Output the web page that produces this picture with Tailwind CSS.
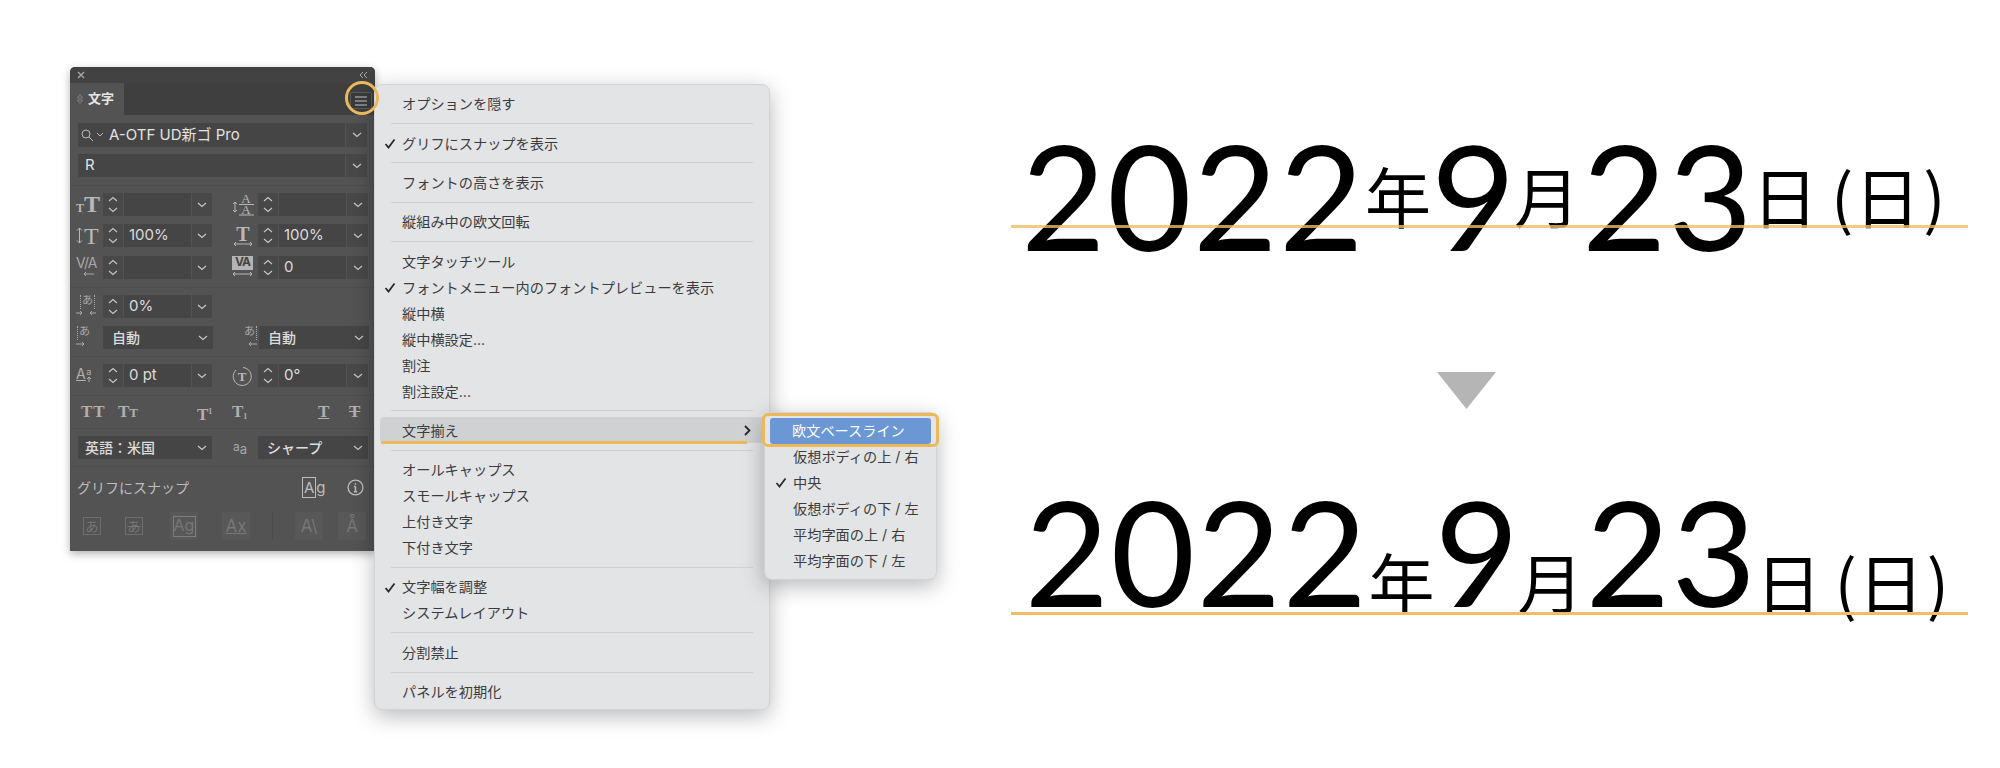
<!DOCTYPE html>
<html lang="ja">
<head>
<meta charset="UTF-8">
<title>文字揃え</title>
<script src="https://cdn.jsdelivr.net/npm/@tailwindcss/browser@4"></script>
</head>
<body class="bg-white">
<div class="relative flex w-[2000px] h-[768px] overflow-hidden bg-white font-['Inter','Noto_Sans_CJK_JP',sans-serif]">

  <!-- Character panel -->
  <div class="absolute left-[70px] top-[67px] w-[305px] h-[484px] bg-[#535353] rounded-t-[5px] shadow-[0_3px_8px_rgba(0,0,0,0.3)] text-[#dcdcdc] text-[15px] flex flex-col">
    <div class="h-[16px] bg-[#424242] rounded-t-[5px] flex items-center justify-between px-[7px] text-[#a8a8a8]">
      <svg class="w-[8px] h-[8px]" viewBox="0 0 8 8"><path d="M1 1l6 6M7 1l-6 6" stroke="currentColor" stroke-width="1.4"/></svg>
      <svg class="w-[9px] h-[8px]" viewBox="0 0 9 8"><path d="M4 1L1 4l3 3M8 1L5 4l3 3" fill="none" stroke="currentColor" stroke-width="1"/></svg>
    </div>
    <div class="h-[32px] bg-[#3f3f3f] flex items-stretch justify-between">
      <div class="w-[54px] bg-[#535353] flex items-center pl-[7px] gap-[5px] text-[13px] font-bold text-[#e6e6e6]">
        <svg class="w-[6px] h-[10px] text-[#8c8c8c]" viewBox="0 0 6 10"><path d="M3 .5L5.5 4h-5zM3 9.500L.5 6h5z" fill="none" stroke="currentColor" stroke-width=".8"/></svg>
        <span>文字</span>
      </div>
      <div class="w-[22px] h-[17px] mt-[9px] mr-[3px] bg-[#3a3a3a] border border-[#5c5c5c] rounded-[2px] flex items-center justify-center">
        <svg class="w-[12px] h-[10px]" viewBox="0 0 12 10"><path d="M0 1h12M0 5h12M0 9h12" stroke="#c6c6c6" stroke-width="1"/></svg>
      </div>
    </div>

    <!-- font family / style -->
    <div class="mx-[8px] mt-[8px] h-[24px] flex gap-[1px]">
      <div class="flex-1 bg-[#454545] flex items-center pl-[2px] text-[#e2e2e2]">
        <svg class="w-[24px] h-[14px] text-[#b9b9b9] mr-[5px]" viewBox="0 0 24 14"><circle cx="6" cy="6" r="4" fill="none" stroke="currentColor" stroke-width="1"/><path d="M9 9l4 4M17 5l3 3 3-3" fill="none" stroke="currentColor" stroke-width="1"/></svg>
        <span>A-OTF UD新ゴ Pro</span>
      </div>
      <div class="w-[21px] bg-[#484848] flex items-center justify-center"><svg class="w-[10px] h-[6px]" viewBox="0 0 10 6"><path d="M1 1l4 3.500L9 1" fill="none" stroke="#c8c8c8" stroke-width="1.200"/></svg></div>
    </div>
    <div class="mx-[8px] mt-[7px] h-[23px] flex gap-[1px]">
      <div class="flex-1 bg-[#454545] flex items-center pl-[7px] text-[#e2e2e2]"><span>R</span></div>
      <div class="w-[21px] bg-[#484848] flex items-center justify-center"><svg class="w-[10px] h-[6px]" viewBox="0 0 10 6"><path d="M1 1l4 3.500L9 1" fill="none" stroke="#c8c8c8" stroke-width="1.200"/></svg></div>
    </div>
    <div class="mt-[8px] h-px bg-[#4d4d4d]"></div>

    <!-- size / leading -->
    <div class="mt-[7px] h-[23px] flex pl-[6px]">
      <div class="w-[27px] flex items-end text-[#b8b8b8] font-['Liberation_Serif',serif] font-bold leading-none"><span class="text-[12px] mb-[2px]">T</span><span class="text-[24px]">T</span></div>
      <div class="w-[20px] bg-[#484848] flex items-center justify-center"><svg class="w-[10px] h-[17px]" viewBox="0 0 10 17"><path d="M1 5l4-3.500L9 5M1 12l4 3.500L9 12" fill="none" stroke="#c8c8c8" stroke-width="1.100"/></svg></div>
      <div class="ml-[1px] w-[67px] bg-[#454545]"></div>
      <div class="ml-[1px] w-[20px] bg-[#484848] flex items-center justify-center"><svg class="w-[10px] h-[6px]" viewBox="0 0 10 6"><path d="M1 1l4 3.500L9 1" fill="none" stroke="#c8c8c8" stroke-width="1.200"/></svg></div>
      <div class="ml-[20px] w-[26px]">
        <svg class="w-[22px] h-[23px] text-[#b8b8b8]" viewBox="0 0 22 23"><text x="14" y="10" text-anchor="middle" font-size="13" font-family="Liberation Serif" fill="currentColor">A</text><text x="14" y="21" text-anchor="middle" font-size="13" font-family="Liberation Serif" fill="currentColor">A</text><path d="M7 11.500h15M7 22h15M3 9v10M1 11l2-2 2 2M1 17l2 2 2-2" fill="none" stroke="currentColor" stroke-width="1"/></svg>
      </div>
      <div class="w-[20px] bg-[#484848] flex items-center justify-center"><svg class="w-[10px] h-[17px]" viewBox="0 0 10 17"><path d="M1 5l4-3.500L9 5M1 12l4 3.500L9 12" fill="none" stroke="#c8c8c8" stroke-width="1.100"/></svg></div>
      <div class="ml-[1px] w-[67px] bg-[#454545]"></div>
      <div class="ml-[1px] w-[21px] bg-[#484848] flex items-center justify-center"><svg class="w-[10px] h-[6px]" viewBox="0 0 10 6"><path d="M1 1l4 3.500L9 1" fill="none" stroke="#c8c8c8" stroke-width="1.200"/></svg></div>
    </div>
    <div class="mt-[8px] h-[23px] flex pl-[6px]">
      <div class="w-[27px] flex items-center text-[#b8b8b8] font-['Liberation_Serif',serif] leading-none"><svg class="w-[7px] h-[17px]" viewBox="0 0 7 17"><path d="M3.500 1v15M1 3.500L3.500 1 6 3.500M1 13.500L3.500 16 6 13.500" fill="none" stroke="currentColor" stroke-width="1"/></svg><span class="text-[24px] ml-px">T</span></div>
      <div class="w-[20px] bg-[#484848] flex items-center justify-center"><svg class="w-[10px] h-[17px]" viewBox="0 0 10 17"><path d="M1 5l4-3.500L9 5M1 12l4 3.500L9 12" fill="none" stroke="#c8c8c8" stroke-width="1.100"/></svg></div>
      <div class="ml-[1px] w-[67px] bg-[#454545] flex items-center pl-[5px]">100%</div>
      <div class="ml-[1px] w-[20px] bg-[#484848] flex items-center justify-center"><svg class="w-[10px] h-[6px]" viewBox="0 0 10 6"><path d="M1 1l4 3.500L9 1" fill="none" stroke="#c8c8c8" stroke-width="1.200"/></svg></div>
      <div class="ml-[20px] w-[26px] flex flex-col items-center text-[#b8b8b8] font-['Liberation_Serif',serif] font-bold leading-none pr-[4px]"><span class="text-[20px] h-[17px]">T</span><svg class="w-[20px] h-[6px]" viewBox="0 0 20 6"><path d="M1 3h18M3 1L1 3l2 2M17 1l2 2-2 2" fill="none" stroke="currentColor" stroke-width="1"/></svg></div>
      <div class="w-[20px] bg-[#484848] flex items-center justify-center"><svg class="w-[10px] h-[17px]" viewBox="0 0 10 17"><path d="M1 5l4-3.500L9 5M1 12l4 3.500L9 12" fill="none" stroke="#c8c8c8" stroke-width="1.100"/></svg></div>
      <div class="ml-[1px] w-[67px] bg-[#454545] flex items-center pl-[5px]">100%</div>
      <div class="ml-[1px] w-[21px] bg-[#484848] flex items-center justify-center"><svg class="w-[10px] h-[6px]" viewBox="0 0 10 6"><path d="M1 1l4 3.500L9 1" fill="none" stroke="#c8c8c8" stroke-width="1.200"/></svg></div>
    </div>
    <div class="mt-[9px] h-[23px] flex pl-[6px]">
      <div class="w-[27px] flex flex-col text-[#a8a8a8] leading-none"><span class="text-[14px] h-[15px] tracking-[-1px]">V/A</span><svg class="w-[20px] h-[6px]" viewBox="0 0 20 6"><path d="M8 3h10M10 1L8 3l2 2" fill="none" stroke="currentColor" stroke-width="1"/></svg></div>
      <div class="w-[20px] bg-[#484848] flex items-center justify-center"><svg class="w-[10px] h-[17px]" viewBox="0 0 10 17"><path d="M1 5l4-3.500L9 5M1 12l4 3.500L9 12" fill="none" stroke="#c8c8c8" stroke-width="1.100"/></svg></div>
      <div class="ml-[1px] w-[67px] bg-[#454545]"></div>
      <div class="ml-[1px] w-[20px] bg-[#484848] flex items-center justify-center"><svg class="w-[10px] h-[6px]" viewBox="0 0 10 6"><path d="M1 1l4 3.500L9 1" fill="none" stroke="#c8c8c8" stroke-width="1.200"/></svg></div>
      <div class="ml-[20px] w-[26px] flex flex-col items-start leading-none"><span class="w-[21px] h-[14px] bg-[#b4b4b4] text-[#444444] text-[12px] font-bold text-center tracking-[-1px]">VA</span><svg class="w-[21px] h-[7px] text-[#b8b8b8]" viewBox="0 0 21 7"><path d="M1 4h19M3 2L1 4l2 2M18 2l2 2-2 2" fill="none" stroke="currentColor" stroke-width="1"/></svg></div>
      <div class="w-[20px] bg-[#484848] flex items-center justify-center"><svg class="w-[10px] h-[17px]" viewBox="0 0 10 17"><path d="M1 5l4-3.500L9 5M1 12l4 3.500L9 12" fill="none" stroke="#c8c8c8" stroke-width="1.100"/></svg></div>
      <div class="ml-[1px] w-[67px] bg-[#454545] flex items-center pl-[5px]">0</div>
      <div class="ml-[1px] w-[21px] bg-[#484848] flex items-center justify-center"><svg class="w-[10px] h-[6px]" viewBox="0 0 10 6"><path d="M1 1l4 3.500L9 1" fill="none" stroke="#c8c8c8" stroke-width="1.200"/></svg></div>
    </div>
    <div class="mt-[8px] h-px bg-[#4d4d4d]"></div>

    <!-- tsume -->
    <div class="mt-[7px] h-[23px] flex pl-[6px]">
      <div class="w-[27px] flex flex-col items-start text-[#a8a8a8] leading-none"><span class="ml-[4px] px-px text-[11px] h-[14px] border-x border-dotted border-[#a8a8a8]">あ</span><svg class="w-[20px] h-[7px]" viewBox="0 0 20 7"><path d="M0 4h6M4 2l2 2-2 2M20 4h-6M16 2l-2 2 2 2" fill="none" stroke="currentColor" stroke-width="1"/></svg></div>
      <div class="w-[20px] bg-[#484848] flex items-center justify-center"><svg class="w-[10px] h-[17px]" viewBox="0 0 10 17"><path d="M1 5l4-3.500L9 5M1 12l4 3.500L9 12" fill="none" stroke="#c8c8c8" stroke-width="1.100"/></svg></div>
      <div class="ml-[1px] w-[67px] bg-[#454545] flex items-center pl-[5px]">0%</div>
      <div class="ml-[1px] w-[20px] bg-[#484848] flex items-center justify-center"><svg class="w-[10px] h-[6px]" viewBox="0 0 10 6"><path d="M1 1l4 3.500L9 1" fill="none" stroke="#c8c8c8" stroke-width="1.200"/></svg></div>
    </div>
    <div class="mt-[8px] h-[23px] flex pl-[6px]">
      <div class="w-[27px] flex flex-col items-start text-[#a8a8a8] leading-none"><span class="ml-[1px] px-px text-[11px] h-[14px] border-l border-dotted border-[#a8a8a8]">あ</span><svg class="w-[20px] h-[7px]" viewBox="0 0 20 7"><path d="M0 4h8M6 2l2 2-2 2" fill="none" stroke="currentColor" stroke-width="1"/></svg></div>
      <div class="w-[110px] bg-[#454545] flex items-center justify-between pl-[9px] pr-[5px] text-[14px] font-medium"><span>自動</span><svg class="w-[10px] h-[6px]" viewBox="0 0 10 6"><path d="M1 1l4 3.500L9 1" fill="none" stroke="#c8c8c8" stroke-width="1.200"/></svg></div>
      <div class="ml-[19px] w-[27px] flex flex-col items-end pr-[2px] text-[#a8a8a8] leading-none"><span class="px-px text-[11px] h-[14px] border-r border-dotted border-[#a8a8a8]">あ</span><svg class="w-[10px] h-[7px]" viewBox="0 0 10 7"><path d="M10 4H2M4 2L2 4l2 2" fill="none" stroke="currentColor" stroke-width="1"/></svg></div>
      <div class="w-[110px] bg-[#454545] flex items-center justify-between pl-[9px] pr-[5px] text-[14px] font-medium"><span>自動</span><svg class="w-[10px] h-[6px]" viewBox="0 0 10 6"><path d="M1 1l4 3.500L9 1" fill="none" stroke="#c8c8c8" stroke-width="1.200"/></svg></div>
    </div>
    <div class="mt-[7px] h-px bg-[#4d4d4d]"></div>

    <!-- baseline shift / rotation -->
    <div class="mt-[7px] h-[23px] flex pl-[6px]">
      <div class="w-[27px] flex items-start text-[#b0b0b0] leading-none"><span class="text-[14px] underline mt-[3px]">A</span><span class="text-[9px] mt-[3px] flex flex-col items-center">a<svg class="w-[6px] h-[6px]" viewBox="0 0 6 6"><path d="M3 6V1M1 3l2-2 2 2" fill="none" stroke="currentColor" stroke-width="1"/></svg></span></div>
      <div class="w-[20px] bg-[#484848] flex items-center justify-center"><svg class="w-[10px] h-[17px]" viewBox="0 0 10 17"><path d="M1 5l4-3.500L9 5M1 12l4 3.500L9 12" fill="none" stroke="#c8c8c8" stroke-width="1.100"/></svg></div>
      <div class="ml-[1px] w-[67px] bg-[#454545] flex items-center pl-[5px]">0 pt</div>
      <div class="ml-[1px] w-[20px] bg-[#484848] flex items-center justify-center"><svg class="w-[10px] h-[6px]" viewBox="0 0 10 6"><path d="M1 1l4 3.500L9 1" fill="none" stroke="#c8c8c8" stroke-width="1.200"/></svg></div>
      <div class="ml-[20px] w-[26px] flex items-center">
        <svg class="w-[20px] h-[20px] text-[#b8b8b8]" viewBox="0 0 20 20"><path d="M4 4a9 9 0 1 0 7-2.500" fill="none" stroke="currentColor" stroke-width="1"/><text x="10" y="15" text-anchor="middle" font-size="13" font-family="Liberation Serif" font-weight="bold" fill="currentColor">T</text></svg>
      </div>
      <div class="w-[20px] bg-[#484848] flex items-center justify-center"><svg class="w-[10px] h-[17px]" viewBox="0 0 10 17"><path d="M1 5l4-3.500L9 5M1 12l4 3.500L9 12" fill="none" stroke="#c8c8c8" stroke-width="1.100"/></svg></div>
      <div class="ml-[1px] w-[67px] bg-[#454545] flex items-center pl-[5px]">0°</div>
      <div class="ml-[1px] w-[21px] bg-[#484848] flex items-center justify-center"><svg class="w-[10px] h-[6px]" viewBox="0 0 10 6"><path d="M1 1l4 3.500L9 1" fill="none" stroke="#c8c8c8" stroke-width="1.200"/></svg></div>
    </div>
    <div class="mt-[8px] h-px bg-[#4d4d4d]"></div>

    <!-- TT row -->
    <div class="mt-[7px] h-[18px] relative text-[#b0b0b0] font-['Liberation_Serif',serif] font-bold text-[17px] leading-[18px]">
      <span class="absolute left-[11px] tracking-[1px]">TT</span>
      <span class="absolute left-[48px]">T<span class="text-[13px]">T</span></span>
      <span class="absolute left-[127px]">T<span class="text-[8px] align-[6px]">1</span></span>
      <span class="absolute left-[162px]">T<span class="text-[8px] align-[-2px]">1</span></span>
      <span class="absolute left-[248px] underline">T</span>
      <span class="absolute left-[279px] line-through">T</span>
    </div>
    <div class="mt-[7px] h-px bg-[#4d4d4d]"></div>

    <!-- language / anti-alias -->
    <div class="mt-[7px] h-[23px] flex pl-[8px]">
      <div class="w-[134px] bg-[#454545] flex items-center justify-between pl-[7px] pr-[5px] text-[14px] font-medium"><span>英語：米国</span><svg class="w-[10px] h-[6px]" viewBox="0 0 10 6"><path d="M1 1l4 3.500L9 1" fill="none" stroke="#c8c8c8" stroke-width="1.200"/></svg></div>
      <div class="w-[46px] pl-[21px] text-[#a8a8a8] text-[12px] leading-[20px]">a<span class="text-[13px] relative top-[3px]">a</span></div>
      <div class="w-[110px] bg-[#454545] flex items-center justify-between pl-[9px] pr-[5px] text-[14px] font-medium"><span>シャープ</span><svg class="w-[10px] h-[6px]" viewBox="0 0 10 6"><path d="M1 1l4 3.500L9 1" fill="none" stroke="#c8c8c8" stroke-width="1.200"/></svg></div>
    </div>
    <div class="mt-[7px] h-px bg-[#4d4d4d]"></div>

    <!-- glyph snap -->
    <div class="mt-[10px] h-[20px] flex items-center pl-[7px] text-[#bdbdbd] text-[14px]">
      <span>グリフにスナップ</span>
      <span class="ml-[113px] text-[15px] leading-none"><span class="border border-[#bdbdbd] px-px">A</span>g</span>
      <svg class="ml-[21px] w-[17px] h-[17px]" viewBox="0 0 16 16"><circle cx="8" cy="8" r="7" fill="none" stroke="currentColor" stroke-width="1.200"/><path d="M8 7v5M6.500 7H8M6.500 12h3M8 4v1.500" fill="none" stroke="currentColor" stroke-width="1.400"/></svg>
    </div>

    <!-- disabled snap buttons -->
    <div class="mt-[15px] h-[28px] flex items-center pl-[13px] text-[#777777] text-[13px] leading-none">
      <span class="w-[18px] h-[18px] border border-[#6e6e6e] flex items-center justify-center">あ</span>
      <span class="ml-[24px] w-[18px] h-[18px] border border-[#6e6e6e] flex items-center justify-center line-through">あ</span>
      <span class="ml-[27px] w-[28px] h-[28px] bg-[#585858] flex items-center justify-center"><span class="w-[23px] h-[21px] border border-[#7c7c7c] text-[16px] text-center">Ag</span></span>
      <span class="ml-[24px] w-[28px] h-[28px] bg-[#585858] flex items-center justify-center text-[17px] underline">Ax</span>
      <span class="ml-[22px] w-px h-[28px] bg-[#4b4b4b]"></span>
      <span class="ml-[22px] w-[28px] h-[28px] bg-[#585858] flex items-center justify-center text-[17px]">A\</span>
      <span class="ml-[15px] w-[28px] h-[28px] bg-[#585858] flex items-center justify-center text-[17px]">Å</span>
    </div>
  </div>

  <!-- Highlight ring on the panel menu button -->
  <div class="absolute left-[345px] top-[81px] w-[34px] h-[34px] rounded-full border-[3px] border-[#ebb95c] z-20"></div>

  <!-- Panel menu -->
  <div class="absolute left-[374px] top-[84px] w-[396px] h-[626px] pt-[6px] bg-[#e3e4e6] rounded-[8px] border border-[#d2d3d5] shadow-[0_6px_22px_rgba(0,0,0,0.28)] text-[#3c3c3e] text-[14.200px] z-10">
    <div class="h-[26px] pl-[27px] flex items-center">オプションを隠す</div>
    <div class="h-[13.300px] flex items-center px-[16px]"><div class="w-full h-px bg-[#cfd0d2]"></div></div>
    <div class="relative h-[26px] pl-[27px] flex items-center"><svg class="absolute left-[9px] w-[12px] h-[11px]" viewBox="0 0 12 11"><path d="M1.500 6l3 3.500L10.500 1.500" fill="none" stroke="#2a2a2a" stroke-width="1.800"/></svg>グリフにスナップを表示</div>
    <div class="h-[13.300px] flex items-center px-[16px]"><div class="w-full h-px bg-[#cfd0d2]"></div></div>
    <div class="h-[26px] pl-[27px] flex items-center">フォントの高さを表示</div>
    <div class="h-[13.300px] flex items-center px-[16px]"><div class="w-full h-px bg-[#cfd0d2]"></div></div>
    <div class="h-[26px] pl-[27px] flex items-center">縦組み中の欧文回転</div>
    <div class="h-[13.300px] flex items-center px-[16px]"><div class="w-full h-px bg-[#cfd0d2]"></div></div>
    <div class="h-[26px] pl-[27px] flex items-center">文字タッチツール</div>
    <div class="relative h-[26px] pl-[27px] flex items-center"><svg class="absolute left-[9px] w-[12px] h-[11px]" viewBox="0 0 12 11"><path d="M1.500 6l3 3.500L10.500 1.500" fill="none" stroke="#2a2a2a" stroke-width="1.800"/></svg>フォントメニュー内のフォントプレビューを表示</div>
    <div class="h-[26px] pl-[27px] flex items-center">縦中横</div>
    <div class="h-[26px] pl-[27px] flex items-center">縦中横設定...</div>
    <div class="h-[26px] pl-[27px] flex items-center">割注</div>
    <div class="h-[26px] pl-[27px] flex items-center">割注設定...</div>
    <div class="h-[13.300px] flex items-center px-[16px]"><div class="w-full h-px bg-[#cfd0d2]"></div></div>
    <div class="relative mx-[5px] h-[26px] pl-[22px] pr-[13px] flex items-center justify-between bg-[#d0d1d3] rounded-[4px]">
      <span>文字揃え</span>
      <svg class="w-[7px] h-[11px]" viewBox="0 0 7 11"><path d="M1 1l4.500 4.500L1 10" fill="none" stroke="#2a2a2a" stroke-width="1.800"/></svg>
      <div class="absolute left-[1px] right-[17px] bottom-[-1px] h-[3px] bg-[#ebb95c]"></div>
    </div>
    <div class="h-[13.300px] flex items-center px-[16px]"><div class="w-full h-px bg-[#cfd0d2]"></div></div>
    <div class="h-[26px] pl-[27px] flex items-center">オールキャップス</div>
    <div class="h-[26px] pl-[27px] flex items-center">スモールキャップス</div>
    <div class="h-[26px] pl-[27px] flex items-center">上付き文字</div>
    <div class="h-[26px] pl-[27px] flex items-center">下付き文字</div>
    <div class="h-[13.300px] flex items-center px-[16px]"><div class="w-full h-px bg-[#cfd0d2]"></div></div>
    <div class="relative h-[26px] pl-[27px] flex items-center"><svg class="absolute left-[9px] w-[12px] h-[11px]" viewBox="0 0 12 11"><path d="M1.500 6l3 3.500L10.500 1.500" fill="none" stroke="#2a2a2a" stroke-width="1.800"/></svg>文字幅を調整</div>
    <div class="h-[26px] pl-[27px] flex items-center">システムレイアウト</div>
    <div class="h-[13.300px] flex items-center px-[16px]"><div class="w-full h-px bg-[#cfd0d2]"></div></div>
    <div class="h-[26px] pl-[27px] flex items-center">分割禁止</div>
    <div class="h-[13.300px] flex items-center px-[16px]"><div class="w-full h-px bg-[#cfd0d2]"></div></div>
    <div class="h-[26px] pl-[27px] flex items-center">パネルを初期化</div>
  </div>

  <!-- Submenu -->
  <div class="absolute left-[764px] top-[412px] w-[173px] h-[168px] pt-[4.500px] bg-[#e3e4e6] rounded-[8px] border border-[#d2d3d5] shadow-[0_6px_22px_rgba(0,0,0,0.28)] text-[#3c3c3e] text-[14.200px] z-10">
    <div class="mx-[5px] h-[26px] pl-[22px] flex items-center bg-[#6b97d4] rounded-[3px] text-white">欧文ベースライン</div>
    <div class="h-[26px] pl-[28px] flex items-center">仮想ボディの上 / 右</div>
    <div class="relative h-[26px] pl-[28px] flex items-center"><svg class="absolute left-[10px] w-[12px] h-[11px]" viewBox="0 0 12 11"><path d="M1.500 6l3 3.500L10.500 1.500" fill="none" stroke="#2a2a2a" stroke-width="1.800"/></svg>中央</div>
    <div class="h-[26px] pl-[28px] flex items-center">仮想ボディの下 / 左</div>
    <div class="h-[26px] pl-[28px] flex items-center">平均字面の上 / 右</div>
    <div class="h-[26px] pl-[28px] flex items-center">平均字面の下 / 左</div>
  </div>
  <div class="absolute left-[762px] top-[413px] w-[177px] h-[34px] rounded-[6px] border-[3px] border-[#ebb95c] z-20"></div>

  <!-- Date samples -->
  <div class="absolute left-[1011px] top-0 w-[957px] h-[768px] flex flex-col items-stretch text-black">
    <div class="relative mt-[114px] h-[160px] leading-[160px] pl-[10px] whitespace-nowrap font-['Lato','Noto_Sans_CJK_JP',sans-serif]">
      <span class="text-[146px] tracking-[1.300px]">2022</span><span class="text-[66px] align-[28px] font-['Noto_Sans_CJK_JP',sans-serif]">年</span><span class="text-[146px] tracking-[1.300px]">9</span><span class="text-[66px] ml-[-3px] align-[28px] font-['Noto_Sans_CJK_JP',sans-serif]">月</span><span class="text-[146px] tracking-[1.300px] ml-[2px]">23</span><span class="text-[66px] ml-[-2px] align-[28px] font-['Noto_Sans_CJK_JP',sans-serif]">日</span><span class="text-[66px] ml-[13px] align-[28px] font-['Noto_Sans_CJK_JP',sans-serif]">(</span><span class="text-[66px] ml-[1px] align-[28px] font-['Noto_Sans_CJK_JP',sans-serif]">日</span><span class="text-[66px] ml-[3px] align-[28px] font-['Noto_Sans_CJK_JP',sans-serif]">)</span>
      <div class="absolute left-0 right-0 top-[111px] h-[3px] bg-[#efbe63]/80"></div>
    </div>
    <svg class="self-start ml-[426px] mt-[98px] w-[59px] h-[37px]" viewBox="0 0 59 37"><path d="M0 0h59L29.500 37z" fill="#b5b5b5"/></svg>
    <div class="relative mt-[62px] h-[160px] leading-[160px] pl-[13.500px] whitespace-nowrap font-['Lato','Noto_Sans_CJK_JP',sans-serif]">
      <span class="text-[146px] tracking-[1.300px]">2022</span><span class="text-[66px] align-[-2px] font-['Noto_Sans_CJK_JP',sans-serif]">年</span><span class="text-[146px] tracking-[1.300px]">9</span><span class="text-[66px] ml-[-3px] align-[-2px] font-['Noto_Sans_CJK_JP',sans-serif]">月</span><span class="text-[146px] tracking-[1.300px] ml-[2px]">23</span><span class="text-[66px] ml-[-2px] align-[-2px] font-['Noto_Sans_CJK_JP',sans-serif]">日</span><span class="text-[66px] ml-[13px] align-[-2px] font-['Noto_Sans_CJK_JP',sans-serif]">(</span><span class="text-[66px] ml-[1px] align-[-2px] font-['Noto_Sans_CJK_JP',sans-serif]">日</span><span class="text-[66px] ml-[3px] align-[-2px] font-['Noto_Sans_CJK_JP',sans-serif]">)</span>
      <div class="absolute left-0 right-0 top-[141px] h-[3px] bg-[#efbe63]"></div>
    </div>
  </div>
</div>
</body>
</html>
